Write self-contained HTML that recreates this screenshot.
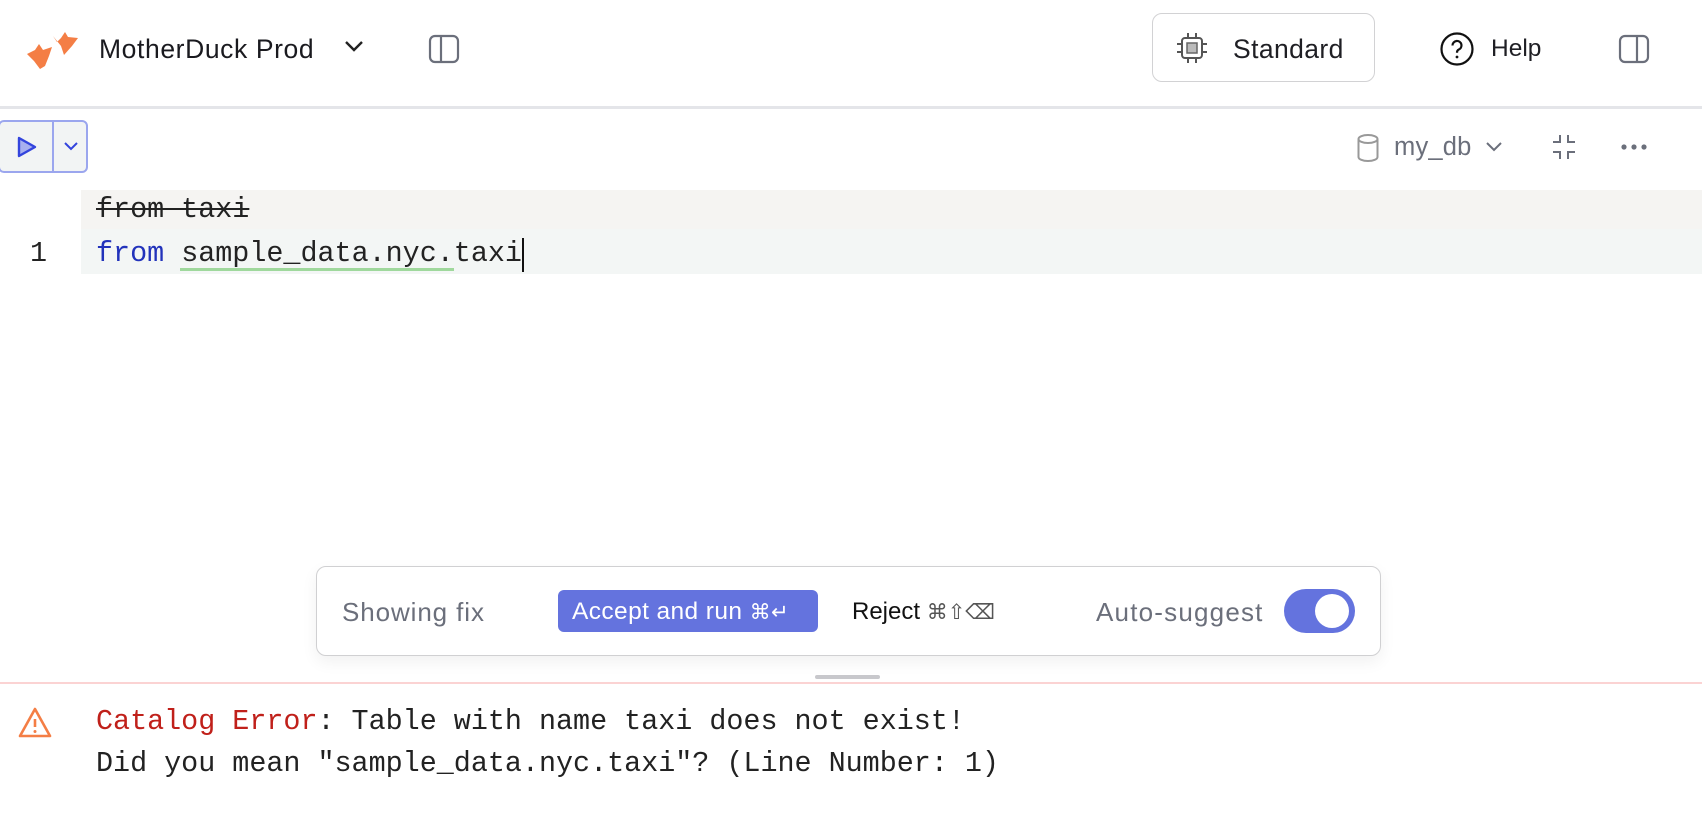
<!DOCTYPE html>
<html><head><meta charset="utf-8"><style>
*{margin:0;padding:0;box-sizing:border-box}
body{width:1702px;height:836px;background:#fff;position:relative;overflow:hidden;font-family:"Liberation Sans",sans-serif;color:#1f1f24}
.a{position:absolute;white-space:nowrap}
.mono{font-family:"Liberation Mono",monospace;font-size:28.4px;white-space:pre}
</style></head><body>
<!-- header -->
<svg class="a" style="left:26px;top:28px" width="56" height="42" viewBox="0 0 56 42">
<path d="M1 26 L9 22 L13 16 L17 22 L26 19 L23 28 L19 38 L14 41 L8 33 Z" fill="#f47e45"/>
<path d="M27 8 L31 14 L35 10 L39 4 L42 9 L52 10 L46 18 L38 27 L35 18 Z" fill="#f47e45"/>
</svg>
<div class="a" style="left:99px;top:34px;font-size:26.5px;letter-spacing:0.6px;color:#1a1a1f">MotherDuck Prod</div>
<svg class="a" style="left:343px;top:38px" width="22" height="16" viewBox="0 0 22 16"><path d="M3 4 L11 12 L19 4" fill="none" stroke="#222" stroke-width="2.4"/></svg>
<svg class="a" style="left:428px;top:34px" width="32" height="30" viewBox="0 0 32 30"><rect x="2" y="2" width="28" height="26" rx="5" fill="none" stroke="#6b6f7b" stroke-width="2.2"/><line x1="13" y1="2" x2="13" y2="28" stroke="#6b6f7b" stroke-width="2.2"/></svg>

<div class="a" style="left:1152px;top:13px;width:223px;height:69px;border:1.5px solid #d2d2d4;border-radius:10px"></div>
<svg class="a" style="left:1174px;top:30px" width="36" height="36" viewBox="0 0 36 36"><rect x="8" y="8" width="20" height="20" rx="3" fill="none" stroke="#555" stroke-width="2"/><rect x="13" y="13" width="10" height="10" fill="#bbb" stroke="#666" stroke-width="1.5"/><path d="M14 3v5M22 3v5M14 28v5M22 28v5M3 14h5M3 22h5M28 14h5M28 22h5" stroke="#555" stroke-width="2"/></svg>
<div class="a" style="left:1233px;top:34px;font-size:26.5px;letter-spacing:0.4px">Standard</div>
<svg class="a" style="left:1439px;top:31px" width="36" height="36" viewBox="0 0 36 36"><circle cx="18" cy="18" r="15.5" fill="none" stroke="#111" stroke-width="2.2"/><path d="M13.5 14.5a4.5 4.5 0 1 1 6 4.2c-1.2.6-1.5 1.3-1.5 3" fill="none" stroke="#111" stroke-width="2.2"/><circle cx="18" cy="26" r="1.4" fill="#111"/></svg>
<div class="a" style="left:1491px;top:35px;font-size:24.5px">Help</div>
<svg class="a" style="left:1618px;top:34px" width="32" height="30" viewBox="0 0 32 30"><rect x="2" y="2" width="28" height="26" rx="5" fill="none" stroke="#6b6f7b" stroke-width="2.2"/><line x1="19" y1="2" x2="19" y2="28" stroke="#6b6f7b" stroke-width="2.2"/></svg>

<div class="a" style="left:0;top:106px;width:1702px;height:3px;background:#e4e5e9"></div>

<!-- toolbar -->
<div class="a" style="left:-2px;top:120px;width:90px;height:53px;border:2px solid #9ba6ee;border-radius:6px;background:#f2f4f4"></div>
<div class="a" style="left:52px;top:122px;width:2px;height:49px;background:#9ba6ee"></div>
<svg class="a" style="left:14px;top:134px" width="26" height="26" viewBox="0 0 26 26"><path d="M5 4 L21 13 L5 22 Z" fill="#a8b0ef" stroke="#3344dd" stroke-width="2.4" stroke-linejoin="round"/></svg>
<svg class="a" style="left:62px;top:139px" width="18" height="14" viewBox="0 0 18 14"><path d="M3 4 L9 10 L15 4" fill="none" stroke="#3344dd" stroke-width="2"/></svg>

<svg class="a" style="left:1356px;top:133px" width="24" height="30" viewBox="0 0 24 30"><ellipse cx="12" cy="6" rx="9.5" ry="4" fill="none" stroke="#999" stroke-width="2"/><path d="M2.5 6v18c0 2.2 4.2 4 9.5 4s9.5-1.8 9.5-4V6" fill="none" stroke="#999" stroke-width="2"/></svg>
<div class="a" style="left:1394px;top:133px;font-size:25.5px;letter-spacing:0.2px;color:#6b6f7b">my_db</div>
<svg class="a" style="left:1484px;top:138px" width="20" height="16" viewBox="0 0 20 16"><path d="M3 5 L10 12 L17 5" fill="none" stroke="#6b6f7b" stroke-width="2"/></svg>
<svg class="a" style="left:1550px;top:132px" width="28" height="30" viewBox="0 0 28 30"><path d="M10 3v7H3M18 3v7h7M10 27v-7H3M18 27v-7h7" fill="none" stroke="#6b6f7b" stroke-width="2"/></svg>
<svg class="a" style="left:1619px;top:141px" width="30" height="12" viewBox="0 0 30 12"><circle cx="5" cy="6" r="2.6" fill="#6b6f7b"/><circle cx="15" cy="6" r="2.6" fill="#6b6f7b"/><circle cx="25" cy="6" r="2.6" fill="#6b6f7b"/></svg>

<!-- code -->
<div class="a" style="left:81px;top:190px;width:1621px;height:39px;background:#f5f4f2"></div>
<div class="a" style="left:81px;top:229px;width:1621px;height:45px;background:#f3f6f5"></div>
<div class="a mono" style="left:96px;top:193px;color:#222;text-decoration:line-through">from taxi</div>
<div class="a mono" style="left:30px;top:237px;color:#222">1</div>
<div class="a mono" style="left:96px;top:237px;color:#222"><span style="color:#2233bb">from</span> sample_data.nyc.taxi</div>
<div class="a" style="left:180px;top:268px;width:274px;height:3px;background:#9fd89c"></div>
<div class="a" style="left:522px;top:238px;width:2px;height:34px;background:#111"></div>

<!-- suggestion bar -->
<div class="a" style="left:316px;top:566px;width:1065px;height:90px;border:1.5px solid #d0d0d2;border-radius:10px;background:#fff;box-shadow:0 6px 16px rgba(0,0,0,0.06)"></div>
<div class="a" style="left:342px;top:597px;font-size:26px;letter-spacing:0.9px;color:#6b6f7b">Showing fix</div>
<div class="a" style="left:558px;top:590px;width:260px;height:42px;background:#6473de;border-radius:6px;color:#fff;font-size:24.5px;letter-spacing:0.4px;line-height:44px;padding-left:14px">Accept and run <span style="font-size:21px">⌘↵</span></div>
<div class="a" style="left:852px;top:598px;font-size:24px;color:#111">Reject <span style="color:#555;font-size:21px">⌘⇧⌫</span></div>
<div class="a" style="left:1096px;top:597px;font-size:26px;letter-spacing:1.2px;color:#6b6f7b">Auto-suggest</div>
<div class="a" style="left:1284px;top:589px;width:71px;height:44px;background:#6473de;border-radius:22px"></div>
<div class="a" style="left:1315px;top:594px;width:34px;height:34px;background:#fff;border-radius:50%"></div>

<div class="a" style="left:815px;top:675px;width:65px;height:4px;background:#c8c8cc;border-radius:2px"></div>
<div class="a" style="left:0;top:682px;width:1702px;height:2px;background:#fbd3d3"></div>

<!-- error -->
<svg class="a" style="left:17px;top:706px" width="36" height="34" viewBox="0 0 36 34"><path d="M18 3 L33 30 H3 Z" fill="none" stroke="#f47e45" stroke-width="2.6" stroke-linejoin="round"/><path d="M18 13v8" stroke="#f47e45" stroke-width="2.6"/><circle cx="18" cy="25.5" r="1.5" fill="#f47e45"/></svg>
<div class="a mono" style="left:96px;top:705px;color:#222"><span style="color:#c0201a">Catalog Error</span>: Table with name taxi does not exist!</div>
<div class="a mono" style="left:96px;top:747px;color:#222">Did you mean "sample_data.nyc.taxi"? (Line Number: 1)</div>
</body></html>
